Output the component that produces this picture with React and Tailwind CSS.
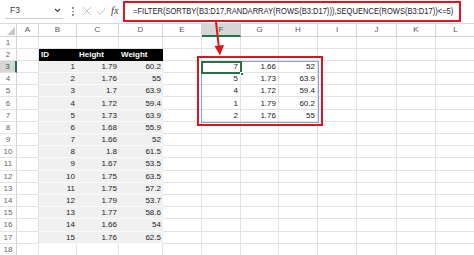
import React from "react";

const COLS = [
  { k: "A", w: 22 },
  { k: "B", w: 38 },
  { k: "C", w: 42 },
  { k: "D", w: 44 },
  { k: "E", w: 39 },
  { k: "F", w: 39 },
  { k: "G", w: 38 },
  { k: "H", w: 39 },
  { k: "I", w: 39 },
  { k: "J", w: 40 },
  { k: "K", w: 39 },
  { k: "L", w: 40 },
];

const DATA = [
  [1, "1.79", "60.2"],
  [2, "1.76", "55"],
  [3, "1.7", "63.9"],
  [4, "1.72", "59.4"],
  [5, "1.73", "63.9"],
  [6, "1.68", "55.9"],
  [7, "1.66", "52"],
  [8, "1.8", "61.5"],
  [9, "1.67", "53.5"],
  [10, "1.75", "63.5"],
  [11, "1.75", "57.2"],
  [12, "1.79", "53.7"],
  [13, "1.77", "58.6"],
  [14, "1.66", "54"],
  [15, "1.76", "62.5"],
];

const SPILL = [
  ["7", "1.66", "52"],
  ["5", "1.73", "63.9"],
  ["4", "1.72", "59.4"],
  ["1", "1.79", "60.2"],
  ["2", "1.76", "55"],
];

function cellContent(row, colIdx) {
  const col = COLS[colIdx].k;
  if (row === 2 && (col === "B" || col === "C" || col === "D")) {
    const t = { B: "ID", C: "Height", D: "Weight" }[col];
    return { text: t, kind: "head" };
  }
  if (row >= 3 && row <= 17 && (col === "B" || col === "C" || col === "D")) {
    const d = DATA[row - 3];
    const v = d[{ B: 0, C: 1, D: 2 }[col]];
    return { text: String(v), kind: "table" };
  }
  if (row >= 3 && row <= 7 && (col === "F" || col === "G" || col === "H")) {
    const d = SPILL[row - 3];
    return { text: d[{ F: 0, G: 1, H: 2 }[col]], kind: "num" };
  }
  return { text: "", kind: "empty" };
}

function Row({ r }) {
  const selRow = r === 3;
  return (
    <div className="flex h-[12.2px]">
      <div
        className={
          "w-[17px] shrink-0 flex items-center justify-center pt-[1px] text-[8px] leading-none border-b border-[#e4e4e4] " +
          (selRow
            ? "bg-[#d6d6d6] text-[#1d6b3c] border-r-2 border-r-[#217346]"
            : "bg-white text-[#666] border-r border-r-[#d4d4d4]")
        }
      >
        {r}
      </div>
      {COLS.map((c, i) => {
        const cc = cellContent(r, i);
        let cls =
          "shrink-0 flex items-center pt-[1px] text-[8px] leading-none overflow-hidden whitespace-nowrap ";
        if (cc.kind === "head") {
          cls += "bg-black text-white font-bold justify-start pl-[2px] ";
        } else if (cc.kind === "table") {
          cls +=
            "bg-[#f0f0f0] text-[#222] justify-end pr-[2px] border-b border-[#fafafa] ";
        } else if (cc.kind === "num") {
          cls +=
            "bg-white text-[#222] justify-end pr-[2px] border-b border-r border-[#e2e2e2] ";
        } else {
          cls += "bg-white border-b border-r border-[#e2e2e2] ";
        }
        return (
          <div key={c.k} className={cls} style={{ width: c.w }}>
            {cc.text}
          </div>
        );
      })}
    </div>
  );
}

export default function App() {
  const rows = Array.from({ length: 18 }, (_, i) => i + 1);
  return (
    <div
      className="relative w-[474px] h-[255px] overflow-hidden bg-white"
      style={{ fontFamily: '"Liberation Sans", Arial, sans-serif' }}
    >
      {/* Formula bar */}
      <div className="h-[23.5px] flex items-center border-b border-[#d8d8d8] bg-white">
        <div className="ml-[5px] w-[58px] h-[15px] flex items-center justify-between border-b border-[#cfcfcf] pl-[5px] pr-[2px]">
          <span className="text-[8.5px] text-[#333]">F3</span>
          <svg width="7" height="5" viewBox="0 0 7 5">
            <path d="M1 1 L3.5 3.5 L6 1" fill="none" stroke="#444" strokeWidth="1.2" />
          </svg>
        </div>
        <div className="w-[20px] flex flex-col items-center justify-center gap-[2px]">
          <div className="w-[1.5px] h-[1.5px] bg-[#777] rounded-full" />
          <div className="w-[1.5px] h-[1.5px] bg-[#777] rounded-full" />
          <div className="w-[1.5px] h-[1.5px] bg-[#777] rounded-full" />
        </div>
        <svg width="10" height="10" viewBox="0 0 10 10" className="ml-[-1px]">
          <path d="M1 1 L9 9 M9 1 L1 9" stroke="#c4c4c4" strokeWidth="1" />
        </svg>
        <svg width="11" height="10" viewBox="0 0 11 10" className="ml-[4px]">
          <path d="M1 5.5 L4 8.5 L10 1.5" fill="none" stroke="#c4c4c4" strokeWidth="1" />
        </svg>
        <span
          className="ml-[4px] text-[10.5px] italic text-[#444]"
          style={{ fontFamily: '"Liberation Serif", serif' }}
        >
          fx
        </span>
        <div className="ml-[2px] flex-1 h-full flex items-center pl-[12px] overflow-hidden whitespace-nowrap">
          <span className="inline-block origin-left scale-x-[0.84] text-[9px] text-[#222]">
            =FILTER(SORTBY(B3:D17,RANDARRAY(ROWS(B3:D17))),SEQUENCE(ROWS(B3:D17))&lt;=5)
          </span>
        </div>
      </div>

      {/* Column headers */}
      <div className="flex h-[13px]">
        <div className="w-[17px] shrink-0 relative bg-white border-r border-b border-[#d4d4d4]">
          <svg width="8" height="8" viewBox="0 0 8 8" className="absolute right-[1px] bottom-[1px]">
            <path d="M8 0 L8 8 L0 8 Z" fill="#c6c6c6" />
          </svg>
        </div>
        {COLS.map((c) => {
          const sel = c.k === "F";
          return (
            <div
              key={c.k}
              className={
                "shrink-0 flex items-center justify-center pt-[1px] text-[8px] leading-none " +
                (sel
                  ? "bg-[#d6d6d6] text-[#1d6b3c] border-r border-r-[#c8c8c8] border-b-2 border-b-[#217346]"
                  : "bg-white text-[#555] border-r border-b border-[#d4d4d4]")
              }
              style={{ width: c.w }}
            >
              {c.k}
            </div>
          );
        })}
      </div>

      {/* Rows */}
      {rows.map((r) => (
        <Row key={r} r={r} />
      ))}

      {/* Spill range border */}
      <div className="absolute left-[201px] top-[61px] w-[118px] h-[62px] border border-[#8aa4cf] pointer-events-none" />
      {/* Selected cell */}
      <div className="absolute left-[201px] top-[60.5px] w-[41px] h-[13.5px] border-2 border-[#217346] pointer-events-none" />
      <div className="absolute left-[239.5px] top-[72px] w-[4px] h-[4px] bg-[#217346] border border-white pointer-events-none" />

      {/* Red annotation boxes */}
      <div className="absolute left-[123px] top-[1px] w-[338px] h-[21px] border-2 border-[#e0141e] pointer-events-none" />
      <div className="absolute left-[197px] top-[56px] w-[126px] h-[70px] border-2 border-[#e0141e] pointer-events-none" />

      {/* Red arrow */}
      <svg
        className="absolute left-0 top-0 pointer-events-none"
        width="474"
        height="255"
        viewBox="0 0 474 255"
      >
        <line x1="216" y1="22" x2="219" y2="48" stroke="#e0141e" strokeWidth="2" />
        <polygon points="214.5,46 224,45 220,55.5" fill="#e0141e" />
      </svg>
    </div>
  );
}
